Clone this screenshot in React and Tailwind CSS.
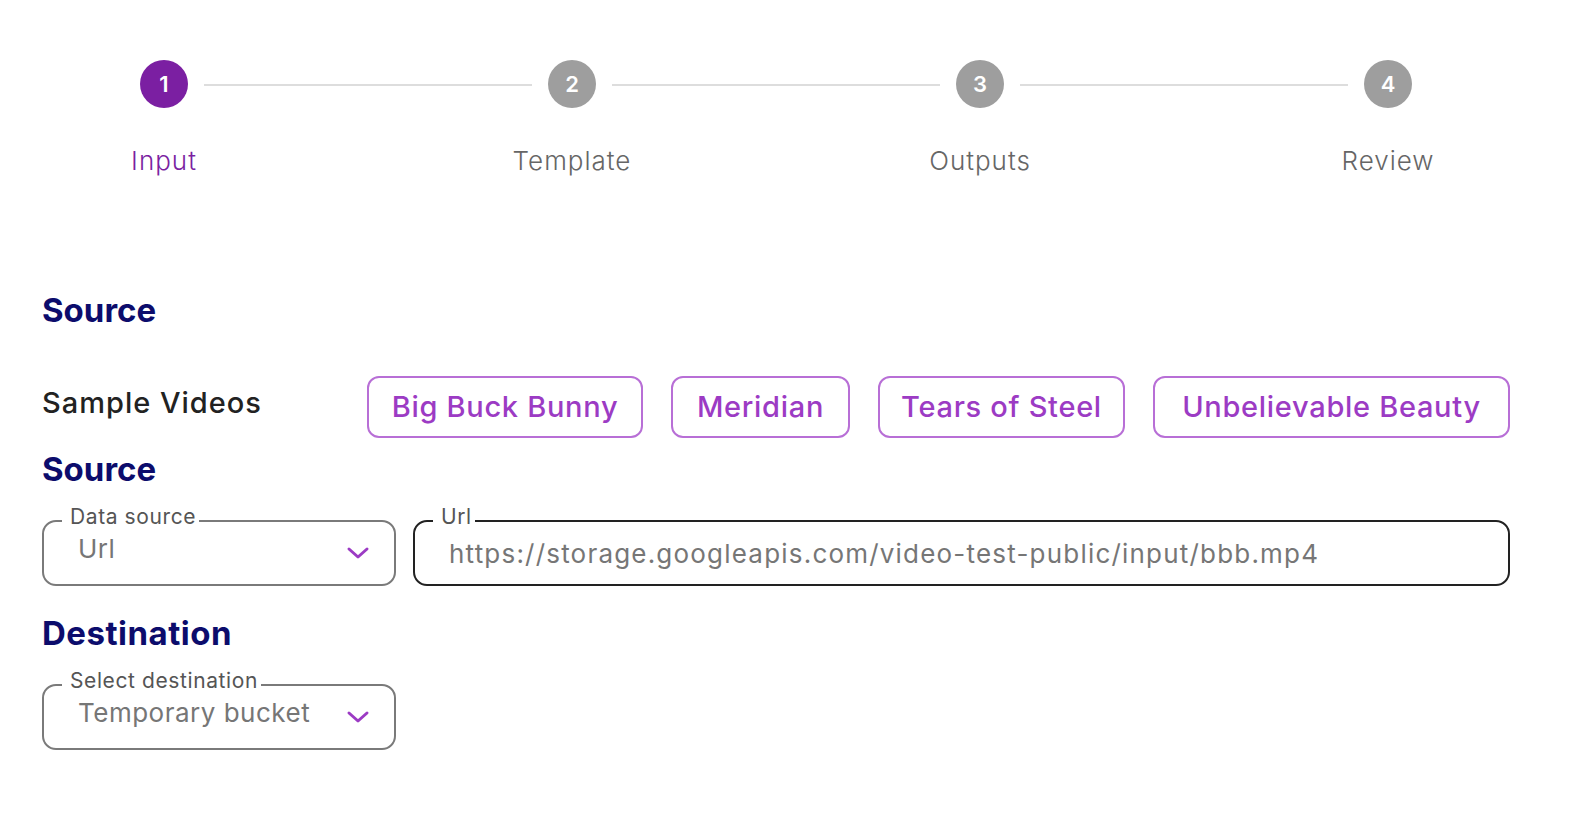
import React from "react";

const steps = ["Input", "Template", "Outputs", "Review"];
const videos = [
  { name: "Big Buck Bunny", w: "w-[276px]" },
  { name: "Meridian", w: "w-[179px]" },
  { name: "Tears of Steel", w: "w-[247px]" },
  { name: "Unbelievable Beauty", w: "w-[357px]" },
];

function Chevron() {
  return (
    <svg width="24" height="14" viewBox="0 0 24 14" fill="none">
      <path d="M3 3l9 8 9-8" stroke="#9c3bc4" strokeWidth="3" strokeLinecap="round" strokeLinejoin="round" />
    </svg>
  );
}

function Field({ label, value, width, dark, select }) {
  return (
    <div className={`relative h-[66px] rounded-[14px] border-2 ${dark ? "border-[#222222]" : "border-[#7a7a7a]"} ${width}`}>
      <span className="absolute left-[18px] -top-[18px] bg-white pl-[8px] pr-[3px] text-[21px] leading-[26px] tracking-[0.6px] text-[#555555] whitespace-nowrap">
        {label}
      </span>
      {select ? (
        <div className="flex h-full items-center justify-between pl-[34px] pr-[24px]">
          <span className="mb-[10px] whitespace-nowrap text-[26px] tracking-[0.5px] text-[#767676]">{value}</span>
          <Chevron />
        </div>
      ) : (
        <div className="flex h-full items-center pl-[34px] pr-4">
          <span className="whitespace-nowrap text-[26px] tracking-[1.2px] text-[#767676]">{value}</span>
        </div>
      )}
    </div>
  );
}

export default function App() {
  return (
    <div className="min-h-[822px] w-[1570px] bg-white font-['Inter',sans-serif]">
      <div className="flex items-start pl-[140px] pr-[158px] pt-[60px]">
        {steps.map((s, i) => (
          <React.Fragment key={s}>
            <div className="flex w-12 flex-col items-center">
              <div
                className={`flex h-12 w-12 items-center justify-center rounded-full text-[22px] font-semibold text-white ${
                  i === 0 ? "bg-[#7b1fa2]" : "bg-[#9e9e9e]"
                }`}
              >
                {i + 1}
              </div>
              <div
                className={`mt-[37px] whitespace-nowrap text-[26px] font-light leading-[32px] tracking-[1px] ${
                  i === 0 ? "text-[#7b1fa2]" : "text-[#666666]"
                }`}
              >
                {s}
              </div>
            </div>
            {i < steps.length - 1 && <div className="mx-4 mt-[24px] h-[2px] flex-1 bg-[#dddddd]" />}
          </React.Fragment>
        ))}
      </div>

      <div className="pl-[42px] pr-[60px]">
        <h2 className="mt-[113px] text-[33px] font-bold leading-[40px] text-[#0c0c6c]">Source</h2>
        <div className="mt-[46px] flex items-center">
          <div className="mb-[8px] w-[325px] shrink-0 whitespace-nowrap text-[29px] font-medium tracking-[1px] text-[#222222]">Sample Videos</div>
          <div className="flex shrink-0 gap-[28px]">
            {videos.map((b) => (
              <button
                key={b.name}
                className={`flex h-[62px] shrink-0 items-center justify-center whitespace-nowrap rounded-[12px] border-2 border-[#b86fd6] text-[29px] font-medium tracking-[0.7px] text-[#9c3bc4] ${b.w}`}
              >
                {b.name}
              </button>
            ))}
          </div>
        </div>
        <h2 className="mt-[11px] text-[33px] font-bold leading-[40px] text-[#0c0c6c]">Source</h2>
        <div className="mt-[31px] flex gap-[17px]">
          <Field label="Data source" value="Url" width="w-[354px]" select />
          <Field label="Url" value="https://storage.googleapis.com/video-test-public/input/bbb.mp4" width="flex-1" dark />
        </div>
        <h2 className="mt-[27px] text-[33px] font-bold leading-[40px] tracking-[0.5px] text-[#0c0c6c]">Destination</h2>
        <div className="mt-[31px] flex">
          <Field label="Select destination" value="Temporary bucket" width="w-[354px]" select />
        </div>
      </div>
    </div>
  );
}
